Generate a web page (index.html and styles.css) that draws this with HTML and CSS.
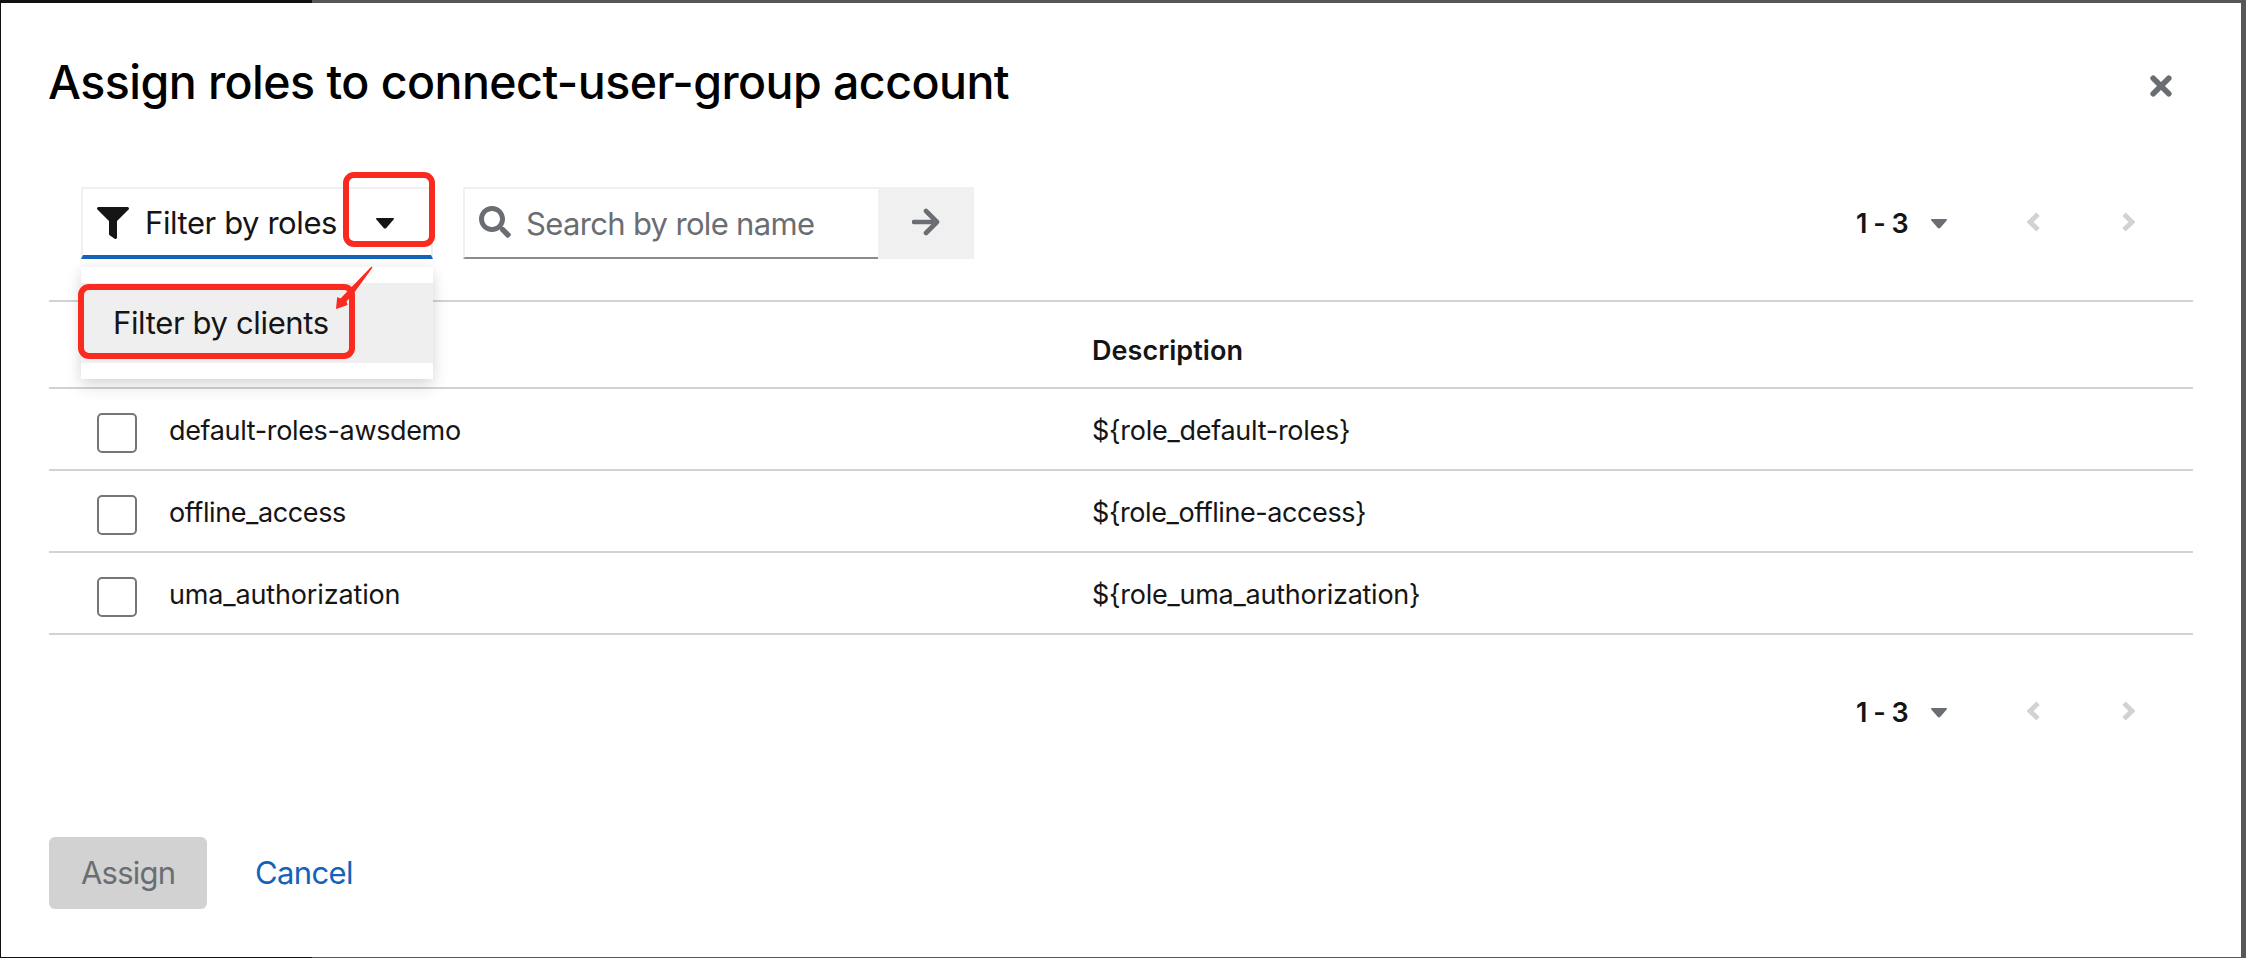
FILE: index.html
```
<!DOCTYPE html>
<html lang="en">
<head>
<meta charset="utf-8">
<title>Assign roles</title>
<link rel="stylesheet" href="styles.css">
</head>
<body>
<div class="backdrop">
  <div class="nav-shade"></div>
  <main class="modal">
    <header class="modal-header">
      <h1 class="title">Assign roles to connect-user-group account</h1>
      <svg class="close" viewBox="0 0 22 22"><path d="M3.2 3.2 18.8 18.8M18.8 3.2 3.2 18.8"/></svg>
    </header>

    <div class="toolbar">
      <div class="select">
        <svg class="funnel" viewBox="0 0 512 512"><path d="M487.976 0H24.028C2.71 0-8.047 25.866 7.058 40.971L192 225.941V432c0 7.831 3.821 15.17 10.237 19.662l80 55.98C298.02 518.69 320 507.493 320 487.98V225.941l184.947-184.97C520.021 25.896 509.338 0 487.976 0z"/></svg>
        <span class="select-label">Filter by roles</span>
        <svg class="caret caret-dark" viewBox="0 0 18 11"><path d="M.8 0h16.4q1.2.4.4 1.5L10.3 10q-1.3 1.1-2.6 0L.4 1.5Q-.4.4.8 0z"/></svg>
        <div class="menu"><div class="menu-item">Filter by clients</div></div>
        <div class="mark mark-caret"></div>
        <div class="mark mark-item"></div>
        <svg class="mark-arrow" viewBox="0 0 40 46"><path d="M37 2Q38.200 1.500 38.400 2.800L20 28 12.500 36.500 13.600 40 2 44 3.200 32 6.500 33.500Z"/></svg>
      </div>
      <div class="search">
        <div class="search-field">
          <svg class="magnifier" viewBox="0 0 512 512"><path d="M505 442.7L405.3 343c-4.5-4.500-10.600-7-17-7H372c27.600-35.300 44-79.700 44-128C416 93.100 322.900 0 208 0S0 93.100 0 208s93.100 208 208 208c48.300 0 92.700-16.400 128-44v16.300c0 6.400 2.500 12.500 7 17l99.700 99.700c9.400 9.400 24.600 9.400 33.900 0l28.300-28.300c9.400-9.400 9.400-24.600.1-34zM208 336c-70.700 0-128-57.200-128-128 0-70.700 57.200-128 128-128 70.700 0 128 57.200 128 128 0 70.700-57.200 128-128 128z"/></svg>
          <span class="placeholder">Search by role name</span>
        </div>
        <div class="search-button">
          <svg class="arrow" viewBox="0 0 28 28"><path d="M2 14H25M14 3 25 14 14 25"/></svg>
        </div>
      </div>
      <div class="pagination">
        <span class="range">1 - 3</span>
        <svg class="caret caret-small" viewBox="0 0 18 11"><path d="M.8 0h16.4q1.200.4.4 1.500L10.300 10q-1.300 1.100-2.600 0L.4 1.500Q-.4.4.8 0z"/></svg>
        <svg class="chevron prev" viewBox="0 0 13 20"><path d="M11 2.200 3 10 11 17.800"/></svg>
        <svg class="chevron next" viewBox="0 0 13 20"><path d="M2 2.200 10 10 2 17.800"/></svg>
      </div>
    </div>

    <div class="table">
      <div class="row head"><span class="description">Description</span></div>
      <div class="row"><span class="checkbox"></span><span class="name n1">default-roles-awsdemo</span><span class="description d1">${role_default-roles}</span></div>
      <div class="row"><span class="checkbox"></span><span class="name n2">offline_access</span><span class="description d2">${role_offline-access}</span></div>
      <div class="row"><span class="checkbox"></span><span class="name n3">uma_authorization</span><span class="description d3">${role_uma_authorization}</span></div>
    </div>

    <div class="bottom-bar">
      <div class="pagination">
        <span class="range">1 - 3</span>
        <svg class="caret caret-small" viewBox="0 0 18 11"><path d="M.8 0h16.4q1.200.4.4 1.500L10.300 10q-1.300 1.100-2.600 0L.4 1.500Q-.4.4.8 0z"/></svg>
        <svg class="chevron prev" viewBox="0 0 13 20"><path d="M11 2.200 3 10 11 17.800"/></svg>
        <svg class="chevron next" viewBox="0 0 13 20"><path d="M2 2.200 10 10 2 17.800"/></svg>
      </div>
    </div>

    <footer class="actions">
      <div class="assign">Assign</div>
      <div class="cancel">Cancel</div>
    </footer>
  </main>
</div>
</body>
</html>
```
FILE: styles.css
```
* { box-sizing: border-box; }
body {
  margin: 0;
  font-family: Inter, "Liberation Sans", sans-serif;
  font-size: 31px;
  color: #151515;
}
svg { display: block; flex: none; }
.backdrop {
  position: relative;
  width: 2246px;
  height: 958px;
  padding: 3px 5px 1px 1px;
  background: #575757;
  overflow: hidden;
}
/* dark sidebar visible around the dialog edge */
.nav-shade {
  position: absolute;
  left: 0;
  top: 0;
  width: 312px;
  height: 958px;
  background: #101012;
}
.modal {
  position: relative;
  height: 954px;
  padding: 48px 48px 0;
  background: #fff;
}
.modal-header {
  display: flex;
  justify-content: space-between;
  height: 62px;
}
.title {
  margin: 0 0 0 -1px;
  font-size: 46.5px;
  font-weight: 500;
  line-height: 62px;
  letter-spacing: -0.54px;
  white-space: nowrap;
  color: #000;
}
.close {
  width: 22px;
  height: 22px;
  margin: 24px 21px 0 0;
  fill: none;
  stroke: #6a6e73;
  stroke-width: 5.6;
  stroke-linecap: round;
}
.toolbar {
  display: flex;
  height: 72px;
  margin-top: 74px;
  padding-left: 32px;
}
.select {
  position: relative;
  display: flex;
  align-items: center;
  width: 352px;
  height: 72px;
  border: 2px solid #f0f0f0;
  border-bottom: 4px solid #1463b8;
  padding: 2px 14px 0;
}
.funnel { width: 32px; height: 32px; fill: #151515; }
.select-label {
  width: 231px;
  margin-left: 16px;
  line-height: 40px;
  letter-spacing: -0.42px;
  white-space: nowrap;
}
.caret { width: 18px; height: 11px; }
.caret-dark { fill: #151515; }
.caret-small { width: 16px; height: 10px; fill: #6a6e73; margin-top: 1px; }
.menu {
  position: absolute;
  z-index: 2;
  top: 78px;
  left: -2px;
  width: 352px;
  padding: 16px 0;
  background: #fff;
  box-shadow: 0 8px 16px rgba(3, 3, 3, 0.12), 0 0 12px rgba(3, 3, 3, 0.06);
}
.menu-item {
  height: 80px;
  padding-left: 32px;
  background: #efefef;
  line-height: 80px;
  letter-spacing: -0.36px;
  white-space: nowrap;
}
/* red call-outs drawn over the controls */
.mark {
  position: absolute;
  z-index: 3;
  border: 6px solid #f92a20;
  border-radius: 11px;
}
.mark-caret { left: 260px; top: -17px; width: 92px; height: 75px; }
.mark-item { left: -5px; top: 95px; width: 277px; height: 75px; }
.mark-arrow {
  position: absolute;
  z-index: 4;
  left: 251px;
  top: 76px;
  width: 40px;
  height: 46px;
  fill: #f92a20;
}
.search { display: flex; margin-left: 30px; }
.search-field {
  display: flex;
  align-items: center;
  width: 415px;
  padding-left: 14px;
  border: 2px solid #f0f0f0;
  border-right: 0;
  border-bottom-color: #8a8d90;
  color: #6a6e73;
}
.magnifier { width: 32px; height: 32px; fill: #6a6e73; margin-top: -2px; }
.placeholder {
  margin-left: 15px;
  letter-spacing: -0.67px;
  white-space: nowrap;
}
.search-button {
  display: flex;
  align-items: center;
  justify-content: center;
  width: 96px;
  background: #f0f0f0;
}
.arrow {
  width: 28px;
  height: 28px;
  margin-top: -2px;
  fill: none;
  stroke: #6a6e73;
  stroke-width: 4.6;
  stroke-linecap: round;
  stroke-linejoin: round;
}
.pagination {
  display: flex;
  align-items: center;
  height: 72px;
  margin-left: auto;
  padding-right: 58px;
}
.range {
  width: 75px;
  font-size: 27px;
  font-weight: 600;
  letter-spacing: -0.52px;
  white-space: nowrap;
}
.chevron {
  width: 13px;
  height: 20px;
  margin-top: -2px;
  fill: none;
  stroke: #d2d2d2;
  stroke-width: 4.8;
}
.prev { margin-left: 80px; }
.next { margin-left: 82px; }
.table {
  margin-top: 41px;
  border-top: 2px solid #d2d2d2;
  font-size: 27px;
}
.row {
  display: grid;
  grid-template-columns: 72px 923px 1fr;
  align-items: center;
  height: 82px;
  padding: 2px 0 0 48px;
  border-bottom: 2px solid #d2d2d2;
  white-space: nowrap;
}
.head {
  height: 87px;
  padding-top: 11px;
  font-weight: 600;
}
.head .description { grid-column: 3; letter-spacing: 0.05px; }
.checkbox {
  width: 40px;
  height: 40px;
  margin-top: 6px;
  border: 2px solid #767676;
  border-radius: 5px;
}
.n1 { letter-spacing: -0.35px; }
.n2 { letter-spacing: -0.4px; }
.n3 { letter-spacing: -0.15px; }
.d1 { letter-spacing: -0.27px; }
.d2 { letter-spacing: -0.42px; }
.d3 { letter-spacing: -0.26px; }
.bottom-bar { display: flex; margin-top: 41px; }
.actions {
  display: flex;
  margin-top: 89px;
  line-height: 72px;
}
.assign {
  width: 158px;
  padding-left: 32px;
  border-radius: 6px;
  background: #d2d2d2;
  color: #6a6e73;
  letter-spacing: -0.8px;
}
.cancel {
  margin-left: 48px;
  color: #1463b8;
  letter-spacing: -0.65px;
}
```
